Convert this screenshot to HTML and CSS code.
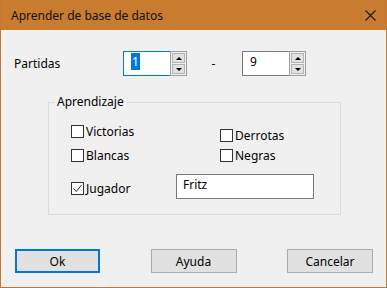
FILE: index.html
```html
<!DOCTYPE html>
<html lang="es">
<head>
    <meta charset="UTF-8">
    <title>Aprender de base de datos</title>
    <link rel="stylesheet" href="styles.css">
</head>
<body>
    <div class="window">
        <div class="titlebar">
            <span class="title">Aprender de base de datos</span>
            <svg class="close" width="11" height="11" viewBox="0 0 11 11">
                <path d="M0.5 0.5 L10.5 10.5 M10.5 0.5 L0.5 10.5" stroke="#1a1a1a" stroke-width="1.1" fill="none"/>
            </svg>
        </div>
        <div class="content">
            <div class="range-row">
                <span class="range-label">Partidas</span>
                <div class="spin focused">
                    <div class="spin-value"><span class="selected">1</span></div>
                    <div class="spin-buttons">
                        <div class="spin-btn"><span class="arrow-up"></span></div>
                        <div class="spin-btn"><span class="arrow-down"></span></div>
                    </div>
                </div>
                <span class="dash">-</span>
                <div class="spin">
                    <div class="spin-value">9</div>
                    <div class="spin-buttons">
                        <div class="spin-btn"><span class="arrow-up"></span></div>
                        <div class="spin-btn"><span class="arrow-down"></span></div>
                    </div>
                </div>
            </div>

            <fieldset class="group">
                <legend>Aprendizaje</legend>
                <div class="check-grid">
                    <label class="check"><span class="box"></span>Victorias</label>
                    <label class="check low"><span class="box"></span>Derrotas</label>
                    <label class="check"><span class="box"></span>Blancas</label>
                    <label class="check"><span class="box"></span>Negras</label>
                </div>
                <div class="player-row">
                    <label class="check">
                        <span class="box">
                            <svg width="11" height="11" viewBox="0 0 11 11">
                                <path d="M1.5 5.5 L4.2 8.5 L9.8 1.8" stroke="#222" stroke-width="1" fill="none"/>
                            </svg>
                        </span>Jugador
                    </label>
                    <div class="text-field">Fritz</div>
                </div>
            </fieldset>

            <div class="button-row">
                <button class="btn default">Ok</button>
                <button class="btn">Ayuda</button>
                <button class="btn">Cancelar</button>
            </div>
        </div>
    </div>
</body>
</html>
```

FILE: styles.css
```css
body { margin: 0; font-family: "Noto Sans", "Open Sans", sans-serif; font-size: 12px; color: #000; }
.window {
    width: 387px;
    height: 288px;
    box-sizing: border-box;
    border: 1px solid #c4772f;
    border-top: none;
    background: #f0f0f0;
}
.titlebar {
    height: 30px;
    background: #c97b30;
    display: flex;
    align-items: center;
    justify-content: space-between;
    padding: 0 10px 0 10px;
}
.title { color: #111; font-size: 12px; }
.close { margin-top: 1px; }

.content { padding: 21px 13px 0 13px; }

.range-row { display: flex; align-items: center; height: 25px; }
.range-label { width: 109px; }
.dash { width: 55px; text-align: center; padding-right: 2px; box-sizing: border-box; }

.spin { display: flex; height: 25px; }
.spin-value {
    width: 47px;
    box-sizing: border-box;
    border: 1px solid #7a7a7a;
    border-right: none;
    background: #fff;
    padding: 2px 0 0 7px;
    line-height: 16px;
}
.spin.focused .spin-value { border-color: #0078d7; }
.selected { background: #0078d7; color: #fff; padding: 0 1px; }
.spin-buttons {
    width: 17px;
    box-sizing: border-box;
    border: 1px solid #a0a0a0;
    background: #f0f0f0;
    display: flex;
    flex-direction: column;
    gap: 1px;
    padding: 1px;
}
.spin-btn {
    flex: 1;
    background: #e1e1e1;
    border: 1px solid #b4b4b4;
    display: flex;
    align-items: center;
    justify-content: center;
}
.arrow-up { border: 3px solid transparent; border-top: none; border-bottom: 3px solid #000; }
.arrow-down { border: 3px solid transparent; border-bottom: none; border-top: 3px solid #000; }

.group {
    margin: 18px 32px 0 34px;
    padding: 0;
    border: 1px solid #dcdcdc;
    height: 121px;
    box-sizing: border-box;
}
.group legend { margin-left: 6px; padding: 0 2px; line-height: 16px; }

.check-grid {
    display: grid;
    grid-template-columns: 149px 1fr;
    row-gap: 9px;
    padding: 14px 0 0 22px;
}
.check { display: flex; align-items: center; gap: 2px; line-height: 15px; height: 15px; }
.check.low { margin: 4px 0 -4px 0; }
.box {
    width: 13px;
    height: 13px;
    box-sizing: border-box;
    border: 1px solid #333;
    background: #fff;
    display: flex;
    align-items: center;
    justify-content: center;
}
.player-row { display: flex; align-items: center; padding: 11px 0 0 22px; }
.player-row .check { width: 105px; margin-top: 3px; }
.text-field {
    width: 138px;
    height: 25px;
    box-sizing: border-box;
    border: 1px solid #7a7a7a;
    background: #fff;
    padding: 2px 0 0 6px;
    line-height: 16px;
}

.button-row { display: flex; justify-content: space-between; margin-top: 34px; padding: 0 0 0 1px; }
.btn {
    width: 86px;
    height: 24px;
    font-family: inherit;
    font-size: 12px;
    background: #e1e1e1;
    border: 1px solid #adadad;
    padding: 0;
}
.btn.default { width: 85px; border: 2px solid #0078d7; }
```
